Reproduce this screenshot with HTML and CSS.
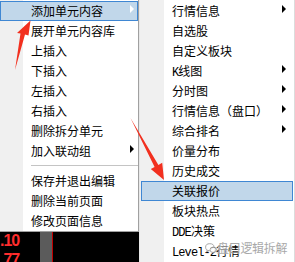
FILE: index.html
```html
<!DOCTYPE html>
<html lang="zh-CN">
<head>
<meta charset="utf-8">
<title>菜单</title>
<link rel="stylesheet" href="styles.css">
</head>
<body>
<div class="screen">
  <div class="left">
    <div class="menu menu-l">
      <div class="item hot"><span class="label">添加单元内容</span><i class="sub"></i></div>
      <div class="item"><span class="label">展开单元内容库</span></div>
      <div class="item"><span class="label">上插入</span></div>
      <div class="item"><span class="label">下插入</span></div>
      <div class="item"><span class="label">左插入</span></div>
      <div class="item"><span class="label">右插入</span></div>
      <div class="item"><span class="label">删除拆分单元</span></div>
      <div class="item"><span class="label">加入联动组</span><i class="sub"></i></div>
      <div class="sep"></div>
      <div class="item"><span class="label">保存并退出编辑</span></div>
      <div class="item"><span class="label">删除当前页面</span></div>
      <div class="item"><span class="label">修改页面信息</span></div>
    </div>
    <div class="quote">
      <div class="prices">
        <div class="px">.10</div>
        <div class="px">.77</div>
      </div>
      <div class="band"></div>
      <div class="redline"></div>
    </div>
  </div>
  <div class="menu menu-r">
    <div class="item"><span class="label">行情信息</span><i class="sub"></i></div>
    <div class="item"><span class="label">自选股</span></div>
    <div class="item"><span class="label">自定义板块</span></div>
    <div class="item"><span class="label"><span class="lat">K</span>线图</span><i class="sub"></i></div>
    <div class="item"><span class="label">分时图</span><i class="sub"></i></div>
    <div class="item"><span class="label">行情信息（盘口）</span><i class="sub"></i></div>
    <div class="item"><span class="label">综合排名</span><i class="sub"></i></div>
    <div class="item"><span class="label">价量分布</span></div>
    <div class="item"><span class="label">历史成交</span></div>
    <div class="item hot"><span class="label">关联报价</span></div>
    <div class="item"><span class="label">板块热点</span></div>
    <div class="item"><span class="label"><span class="lat">DDE</span>决策</span></div>
    <div class="item"><span class="label"><span class="lat">Level-2</span>行情</span></div>
  </div>

  <div class="watermark">
    <svg class="wm-icon" width="12" height="11" viewBox="0 0 12 11">
      <ellipse cx="4.8" cy="4.2" rx="4.2" ry="3.5" fill="none" stroke="#999" stroke-width="1"/>
      <path d="M2.2 7 L1.6 9 L4 7.6" fill="none" stroke="#999" stroke-width="1"/>
      <ellipse cx="8.2" cy="6.8" rx="3.2" ry="2.7" fill="#fff" stroke="#999" stroke-width="1"/>
    </svg>
    <span class="wm-text">盘口逻辑拆解</span>
  </div>

  <svg class="arrows" width="295" height="262" viewBox="0 0 295 262">
    <polygon points="30.5,20.5 28.5,35.5 25,34.5 15,70 20.5,33.5 17,33" fill="#f2301f"/>
    <polygon points="164,180 162.2,162.8 158.4,164.9 130.5,118 154.6,166.9 150.8,169" fill="#f2301f"/>
  </svg>
</div>
</body>
</html>
```
FILE: styles.css
```css
html, body {
  margin: 0;
  padding: 0;
}
body {
  width: 295px;
  height: 262px;
  overflow: hidden;
  background: #000;
  font-family: "Noto Sans CJK SC", "Noto Sans", sans-serif;
  font-size: 12px;
  color: #000;
}
.screen {
  position: relative;
  display: flex;
  width: 295px;
  height: 262px;
  overflow: hidden;
}
.left {
  width: 139px;
  display: flex;
  flex-direction: column;
}
.menu {
  box-sizing: border-box;
  display: flex;
  flex-direction: column;
}
.menu-l {
  width: 139px;
  height: 232px;
  padding-top: 1px;
  border-right: 1px solid #a0a0a0;
  border-bottom: 1px solid #a0a0a0;
  background: linear-gradient(to right, #f0f0f0 0, #f0f0f0 23px, #fff 23px);
}
.menu-r {
  width: 156px;
  height: 262px;
  padding: 1px 1px 0 1px;
  border-left: 1px solid #e8e8e8;
  border-right: 1px solid #dcdcdc;
  background: linear-gradient(to right, #f0f0f0 0, #f0f0f0 24px, #fff 24px);
}
.item {
  box-sizing: border-box;
  height: 20px;
  flex: none;
  display: flex;
  border: 1px solid transparent;
  line-height: 18px;
  white-space: nowrap;
}
.menu-l .item {
  width: 138px;
  padding: 0 3px 0 30px;
}
.menu-r .item {
  width: 152px;
  padding: 0 6px 0 30px;
}
.item.hot {
  background: #c1d7ea;
  border-color: #3f87d3;
}
.label {
  flex: 1;
}
.lat {
  font-family: "Liberation Mono", "DejaVu Sans Mono", monospace;
  font-size: 12px;
  letter-spacing: -0.9px;
}
.sub {
  flex: none;
  width: 0;
  height: 0;
  margin-top: 3px;
  border-left: 4px solid #000;
  border-top: 4px solid transparent;
  border-bottom: 4px solid transparent;
}
.hot .sub {
  border-left-color: #fff;
}
.sep {
  flex: none;
  height: 10px;
  box-sizing: border-box;
  padding-top: 4px;
  margin-left: 31px;
}
.sep::before {
  content: "";
  display: block;
  height: 1px;
  background: #c4c4c4;
}
.quote {
  flex: 1;
  display: flex;
  background: #000;
  overflow: hidden;
}
.prices {
  width: 40px;
  flex: none;
  overflow: hidden;
}
.px {
  font-family: "Liberation Sans", Arial, sans-serif;
  font-weight: bold;
  font-size: 16px;
  line-height: 20px;
  letter-spacing: -1px;
  color: #ff2d2d;
  margin-top: -1px;
}
.band {
  width: 12px;
  flex: none;
  background: #5b5b5b;
}
.redline {
  width: 1px;
  flex: none;
  background: #c00000;
}
.watermark {
  position: absolute;
  left: 205px;
  top: 240px;
  display: flex;
  align-items: center;
  opacity: 0.85;
}
.wm-icon {
  display: block;
}
.wm-text {
  font-size: 12px;
  line-height: 16px;
  color: #9a9a9a;
  text-shadow: 0 0 1px #fff, 0 0 1px #fff;
  letter-spacing: -0.3px;
}
.arrows {
  position: absolute;
  left: 0;
  top: 0;
  pointer-events: none;
}
```
